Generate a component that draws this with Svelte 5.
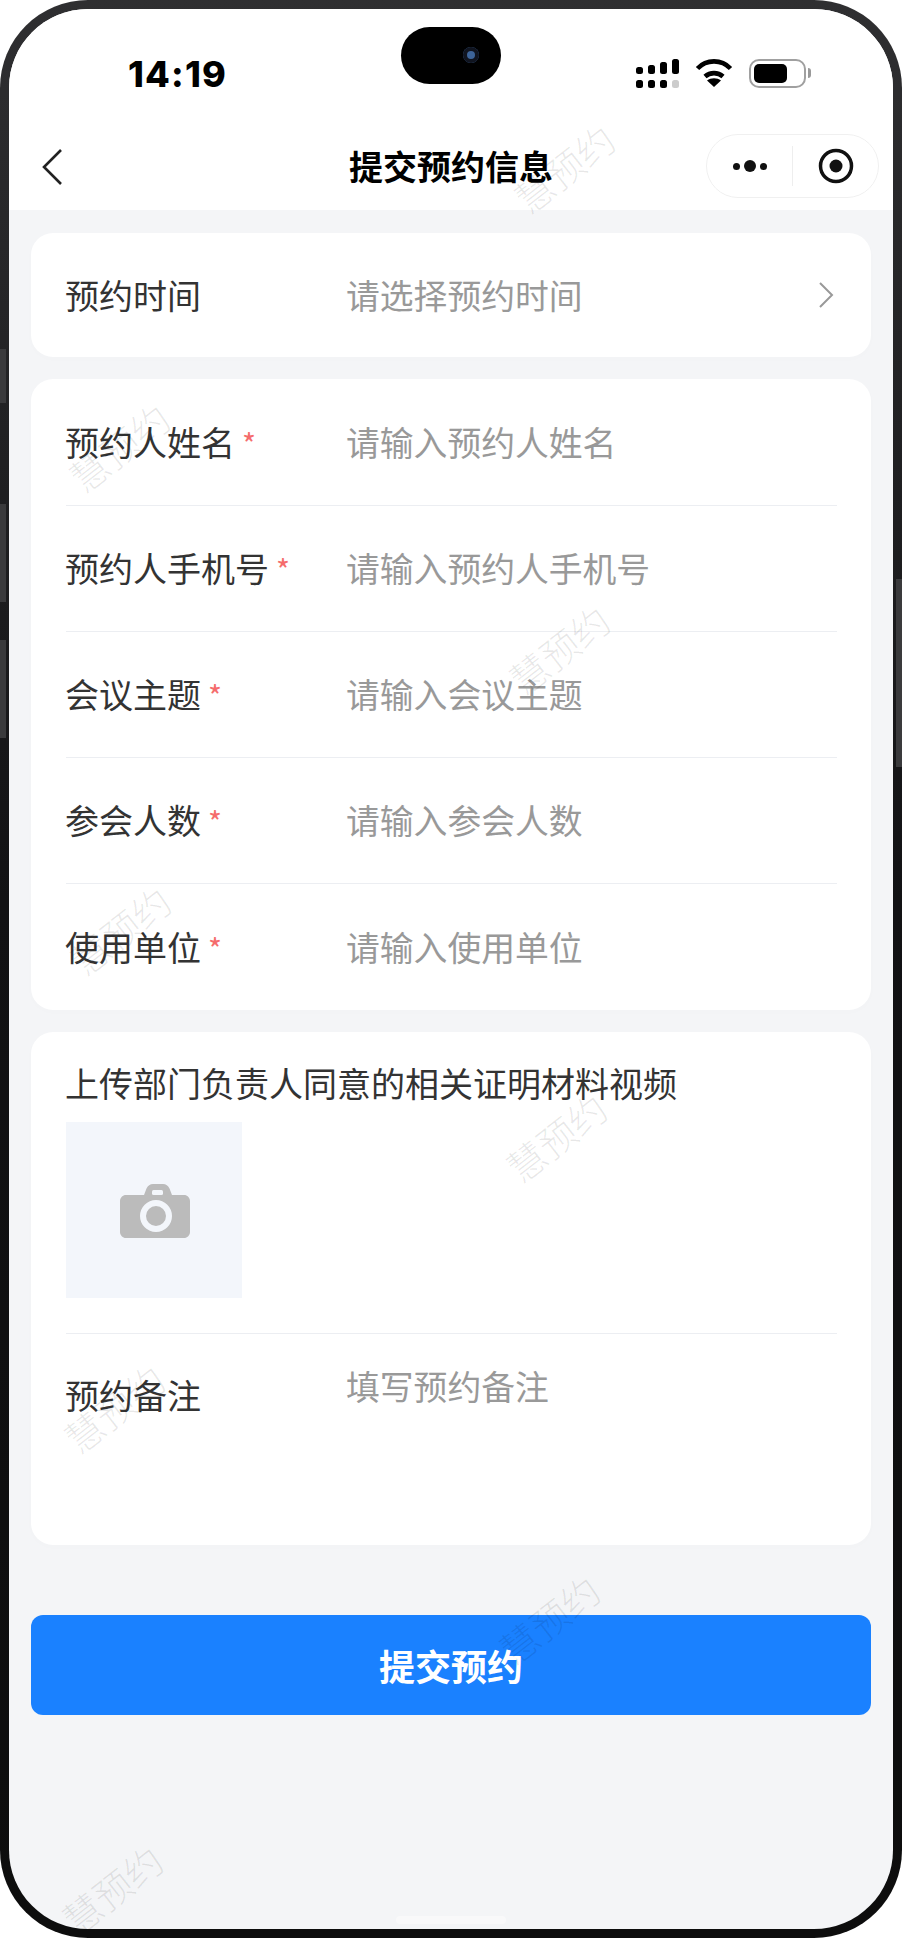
<script lang="ts">
	const rows = [
		{ label: "预约人姓名", hint: "请输入预约人姓名" },
		{ label: "预约人手机号", hint: "请输入预约人手机号" },
		{ label: "会议主题", hint: "请输入会议主题" },
		{ label: "参会人数", hint: "请输入参会人数" },
		{ label: "使用单位", hint: "请输入使用单位" },
	];
	const marks = [
		{ x: 498, y: 134 },
		{ x: 53, y: 413 },
		{ x: 493, y: 615 },
		{ x: 54, y: 896 },
		{ x: 490, y: 1103 },
		{ x: 48, y: 1374 },
		{ x: 483, y: 1585 },
		{ x: 46, y: 1855 },
	];
	const bars = [7, 9, 12, 15];
</script>

<div class="phone">
	<div class="key left k1"></div>
	<div class="key left k2"></div>
	<div class="key left k3"></div>
	<div class="key right k4"></div>

	<div class="screen">
		<header class="top">
			<div class="status">
				<span class="time">14:19</span>
				<div class="status-icons">
					<div class="signal">
						{#each bars as h, i}
							<div class="signal-col">
								<i style={`height:${h}px`}></i>
								<i class={i === 3 ? "dim" : ""}></i>
							</div>
						{/each}
					</div>
					<svg class="wifi" width="38" height="28" viewBox="0 0 38 28">
						<path d="M2.500 9.500C11.500 0 26.500 0 35.500 9.500" fill="none" stroke="#000" stroke-width="4.600" />
						<path d="M10 17.500C15 13 23 13 28 17.500" fill="none" stroke="#000" stroke-width="4.600" />
						<path d="M19 28L12 21.500C16 18.500 22 18.500 26 21.500z" fill="#000" />
					</svg>
					<div class="battery"><div class="charge"></div></div>
					<div class="nub"></div>
				</div>
			</div>
			<div class="island"><div class="lens"></div></div>
			<nav class="nav">
				<svg class="back" width="24" height="38" viewBox="0 0 24 38">
					<path d="M20 2L3 19l17 17" fill="none" stroke="#222" stroke-width="2.600" />
				</svg>
				<h1>提交预约信息</h1>
				<div class="capsule">
					<div class="dots"><i></i><i class="big"></i><i></i></div>
					<div class="sep"></div>
					<svg width="36" height="36" viewBox="0 0 36 36">
						<circle cx="18" cy="18" r="15.500" fill="none" stroke="#111" stroke-width="3.500" />
						<circle cx="18" cy="18" r="6.500" fill="#111" />
					</svg>
				</div>
			</nav>
		</header>

		<main class="content">
			<section class="card">
				<div class="row single">
					<span class="label">预约时间</span>
					<span class="hint">请选择预约时间</span>
					<svg class="chev" width="16" height="28" viewBox="0 0 16 28">
						<path d="M2 2l12 12L2 26" fill="none" stroke="#999" stroke-width="2" />
					</svg>
				</div>
			</section>

			<section class="card form">
				{#each rows as r, i}
					<div class="row" class:last={i === rows.length - 1}>
						<span class="label">{r.label}<span class="star">*</span></span>
						<span class="hint">{r.hint}</span>
					</div>
				{/each}
			</section>

			<section class="card">
				<div class="upload">
					<div class="upload-title">上传部门负责人同意的相关证明材料视频</div>
					<div class="upload-box">
						<svg class="camera" width="70" height="54" viewBox="0 0 70 54">
							<path d="M6 11h18l2.500-6.500C28 1.500 30 0 33 0h10c3 0 5 1.500 6.500 4.500L52 11h12c3.300 0 6 2.700 6 6v31c0 3.300-2.700 6-6 6H6c-3.300 0-6-2.700-6-6V17c0-3.300 2.700-6 6-6z" fill="#bbb" />
							<rect x="32" y="6" width="11" height="5" rx="1.500" fill="#f3f6fb" />
							<circle cx="36" cy="32" r="13" fill="none" stroke="#f3f6fb" stroke-width="6" />
						</svg>
					</div>
				</div>
				<div class="note">
					<span class="label">预约备注</span>
					<span class="hint">填写预约备注</span>
				</div>
			</section>

			<button class="submit">提交预约</button>
		</main>

		<div class="home"></div>

		{#each marks as m}
			<span class="mark" style={`left:${m.x}px;top:${m.y}px`}>慧预约</span>
		{/each}
	</div>
</div>

<style>
	:global(body) {
		margin: 0;
		background: #fff;
	}
	.phone {
		position: relative;
		width: 902px;
		height: 1938px;
		box-sizing: border-box;
		padding: 9px;
		border-radius: 88px;
		background: linear-gradient(#2f2f31, #222224 400px, #121214 900px, #0d0d0d);
		font-family: "Noto Sans CJK SC", "Noto Sans", sans-serif;
	}
	.key {
		position: absolute;
		width: 6px;
		background: #3a3a3c;
	}
	.key.left {
		left: 0;
	}
	.key.right {
		right: 0;
	}
	.k1 {
		top: 349px;
		height: 54px;
	}
	.k2 {
		top: 504px;
		height: 98px;
	}
	.k3 {
		top: 640px;
		height: 98px;
	}
	.k4 {
		top: 579px;
		height: 188px;
	}
	.screen {
		height: 100%;
		display: flex;
		flex-direction: column;
		position: relative;
		overflow: hidden;
		border-radius: 79px;
		background: #f4f5f7;
	}
	.top {
		background: #fff;
		height: 201px;
		flex: none;
		position: relative;
	}
	.status {
		height: 116px;
		display: flex;
		justify-content: space-between;
		padding: 50px 82px 0 119px;
		box-sizing: border-box;
	}
	.time {
		font-family: Inter, "Liberation Sans", sans-serif;
		font-weight: 800;
		font-size: 36px;
		line-height: 34px;
		letter-spacing: 1.200px;
		color: #000;
		margin-top: -2px;
	}
	.status-icons {
		display: flex;
		align-items: flex-start;
		height: 30px;
	}
	.signal {
		display: flex;
		gap: 5px;
		align-items: flex-end;
		height: 29px;
	}
	.signal-col {
		display: flex;
		flex-direction: column;
		gap: 6px;
		width: 7px;
	}
	.signal-col i {
		display: block;
		height: 8px;
		background: #000;
		border-radius: 2.500px;
	}
	.signal-col i.dim {
		background: #ccc;
	}
	.wifi {
		margin-left: 16px;
	}
	.battery {
		margin-left: 16px;
		width: 57px;
		height: 29px;
		box-sizing: border-box;
		border: 2px solid #a0a0a0;
		border-radius: 10px;
		padding: 3px;
	}
	.charge {
		width: 33px;
		height: 19px;
		background: #000;
		border-radius: 5px;
	}
	.nub {
		width: 3px;
		height: 10px;
		margin: 9px 0 0 2px;
		background: #999;
		border-radius: 0 3px 3px 0;
	}
	.island {
		position: absolute;
		left: 392px;
		top: 18px;
		width: 100px;
		height: 57px;
		border-radius: 29px;
		background: #000;
	}
	.lens {
		position: absolute;
		right: 22px;
		top: 20px;
		width: 16px;
		height: 16px;
		border-radius: 50%;
		background: #3d6499;
		box-shadow: inset 0 0 0 4px #10141f;
	}
	.nav {
		height: 85px;
		display: flex;
		align-items: center;
		justify-content: center;
		position: relative;
	}
	.back {
		position: absolute;
		left: 32px;
		top: 23px;
	}
	h1 {
		margin: 0 0 4px;
		font-size: 34px;
		font-weight: 700;
		color: #000;
		line-height: 48px;
	}
	.capsule {
		position: absolute;
		left: 697px;
		top: 9px;
		width: 173px;
		height: 64px;
		box-sizing: border-box;
		border: 1px solid #f0f0f0;
		border-radius: 32px;
		display: flex;
		align-items: center;
	}
	.dots {
		width: 85px;
		display: flex;
		align-items: center;
		justify-content: center;
		gap: 4px;
	}
	.dots i {
		width: 7px;
		height: 7px;
		border-radius: 50%;
		background: #111;
	}
	.dots i.big {
		width: 12px;
		height: 12px;
	}
	.sep {
		width: 1px;
		height: 40px;
		background: #eee;
		margin-right: 25px;
	}
	.content {
		padding: 23px 22px 0;
		display: flex;
		flex-direction: column;
		gap: 22px;
	}
	.card {
		background: #fff;
		border-radius: 22px;
		box-shadow: 0 2px 10px rgba(0, 0, 0, 0.012);
	}
	.card.form {
		padding-top: 1px;
	}
	.row {
		height: 126px;
		margin: 0 34px 0 35px;
		box-sizing: border-box;
		border-bottom: 1.500px solid #eceef2;
		display: flex;
		align-items: center;
		position: relative;
	}
	.row.last,
	.row.single {
		border-bottom: none;
	}
	.row.single {
		height: 124px;
	}
	.label {
		width: 281px;
		margin-left: -1px;
		flex: none;
		font-size: 34px;
		line-height: 48px;
		color: #333;
	}
	.star {
		color: #f56c6c;
		font-size: 30px;
		margin-left: 7px;
	}
	.hint {
		font-size: 33.800px;
		line-height: 48px;
		color: #999;
		margin-top: -1px;
	}
	.chev {
		position: absolute;
		right: 3px;
		top: 48px;
	}
	.upload {
		margin: 0 34px 0 35px;
		padding: 27px 0 35px;
		border-bottom: 1.500px solid #eceef2;
	}
	.upload-title {
		font-size: 34px;
		line-height: 48px;
		color: #333;
		margin-left: -1px;
		margin-bottom: 15px;
	}
	.upload-box {
		width: 176px;
		height: 176px;
		background: #f3f6fb;
		display: flex;
		align-items: center;
		justify-content: center;
		padding-top: 2px;
		box-sizing: border-box;
	}
	.camera {
		margin-left: 1px;
	}
	.note {
		height: 210.500px;
		margin: 0 34px 0 35px;
		padding-top: 29px;
		box-sizing: border-box;
		display: flex;
		align-items: flex-start;
	}
	.note .label {
		margin-top: 8px;
	}
	.submit {
		margin-top: 48px;
		height: 100px;
		border: none;
		border-radius: 12px;
		background: #1a81ff;
		color: #fff;
		font-family: inherit;
		font-size: 36px;
		font-weight: 600;
	}
	.home {
		position: absolute;
		left: 387px;
		bottom: 5px;
		width: 110px;
		height: 8px;
		border-radius: 4px;
		background: #f9f9fa;
	}
	.mark {
		position: absolute;
		font-size: 38px;
		line-height: 50px;
		font-weight: 300;
		color: rgba(0, 0, 0, 0.09);
		transform: rotate(-38deg);
		transform-origin: center;
		white-space: nowrap;
		pointer-events: none;
	}
</style>
